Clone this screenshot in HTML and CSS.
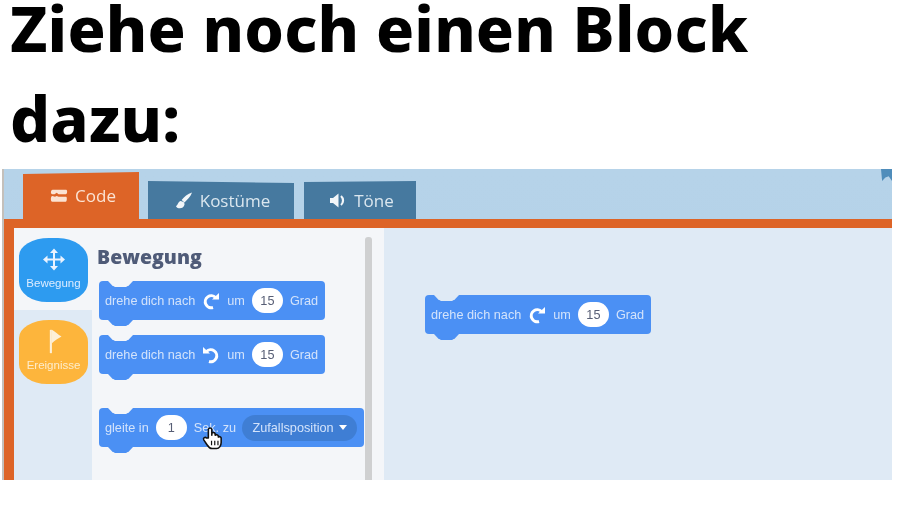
FILE: index.html
```html
<!DOCTYPE html>
<html lang="de">
<head>
    <meta charset="UTF-8">
    <title>Ziehe noch einen Block dazu</title>
    <link rel="stylesheet" href="styles.css">
</head>
<body>
<svg class="icon-defs" width="0" height="0">
    <symbol id="turn-right" viewBox="0 0 18 18">
        <path d="M13.500 5.500A6 6 0 1 0 11 15.500" fill="none" stroke="#fff" stroke-width="3"/>
        <path d="M10 7.500h7V1z" fill="#fff"/>
    </symbol>
    <symbol id="turn-left" viewBox="0 0 18 18">
        <path d="M4.500 5.500A6 6 0 1 1 7 15.500" fill="none" stroke="#fff" stroke-width="3"/>
        <path d="M8 7.500H1V1z" fill="#fff"/>
    </symbol>
</svg>

<h1 class="title">
    <span class="title-line">Ziehe noch einen Block</span>
    <span class="title-line">dazu:</span>
</h1>

<div class="scratch">
    <div class="ribbon"></div>
    <div class="tabs">
        <div class="tab tab-code">
            <svg class="tab-icon" viewBox="0 0 20 14"><path d="M3 .5h15c1.500 0 1.500 5-.5 5H9.500L7.500 4 5 5.500H2.500C.5 5.500.5.500 3 .5zM2.500 7.500l3 1 2-1 2 1h8.500c1 0 1 5.500-.5 5.500H2.500C.5 14 .5 7.500 2.500 7.500z" fill="#fbe3d3"/></svg>
            <span>Code</span>
        </div>
        <div class="tab tab-costumes">
            <svg class="tab-icon" viewBox="0 0 18 18"><path d="M17.500.5C13 2 9 5 6.500 8.500l3 2.500C12.500 8 16 5 17.500.5zM5.500 9.500C3 10 3 13 .5 15c2 3.500 8 3 9-1.500.3-1.500-.5-2.500-1-3z" fill="#f2f6f9"/></svg>
            <span>Kostüme</span>
        </div>
        <div class="tab tab-sounds">
            <svg class="tab-icon" viewBox="0 0 18 16"><path d="M1 5.500h3L9.500 1v14L4 10.500H1z" fill="#f2f6f9"/><path d="M12 3.500a6 6 0 0 1 0 9" fill="none" stroke="#f2f6f9" stroke-width="2.200"/></svg>
            <span>Töne</span>
        </div>
    </div>

    <div class="editor">
        <div class="categories">
            <div class="category-slot">
                <div class="category category-motion">
                    <svg class="category-icon" viewBox="0 0 24 24">
                        <path d="M12 1l4 4.500h-3V11h5.500V8l4.500 4-4.500 4v-3H13v5.500h3L12 23l-4-4.500h3V13H5.500v3L1 12l4.500-4v3H11V5.500H8z" fill="#eaf3ff"/>
                    </svg>
                    <span>Bewegung</span>
                </div>
            </div>
            <div class="category-slot category-slot-low">
                <div class="category category-events">
                    <svg class="category-icon" viewBox="0 0 24 30">
                        <path d="M7 1h2.500v28H7z" fill="#fdf0d8"/>
                        <path d="M9.500 1C13 3 17 7 21 9c-4 2-8 5-11.500 8z" fill="#fdf0d8"/>
                    </svg>
                    <span>Ereignisse</span>
                </div>
            </div>
        </div>

        <div class="palette">
            <div class="palette-list">
                <h2 class="palette-title">Bewegung</h2>
                <div class="block block-turn">
                    <span>drehe dich nach</span>
                    <svg class="turn-icon"><use href="#turn-right"/></svg>
                    <span>um</span>
                    <span class="pill">15</span>
                    <span>Grad</span>
                </div>
                <div class="block block-turn">
                    <span>drehe dich nach</span>
                    <svg class="turn-icon"><use href="#turn-left"/></svg>
                    <span>um</span>
                    <span class="pill">15</span>
                    <span>Grad</span>
                </div>
                <div class="block block-glide">
                    <span>gleite in</span>
                    <span class="pill">1</span>
                    <span>Sek. zu</span>
                    <span class="dropdown">Zufallsposition <i class="caret"></i></span>
                    <svg class="cursor" viewBox="0 0 24 28">
                        <path d="M8 14V4.500a2 2 0 0 1 3.800 0V11l0-2a2 2 0 0 1 3.500 0l.2 2a2 2 0 0 1 3.300.5l.2 1.500a1.800 1.800 0 0 1 3 1v5c0 3-2 6.500-5 6.500h-5c-3 0-4-2-6-5l-3-4.500c-1-2 1.500-3.500 3-2z" fill="#fff" stroke="#111" stroke-width="1.700" stroke-linejoin="round"/>
                        <path d="M11.500 17v5M15 17v5M18.500 17v5" stroke="#111" stroke-width="1.300"/>
                    </svg>
                </div>
            </div>
            <div class="scrollbar"></div>
        </div>

        <div class="workspace">
            <div class="block block-turn block-placed">
                <span>drehe dich nach</span>
                <svg class="turn-icon"><use href="#turn-right"/></svg>
                <span>um</span>
                <span class="pill">15</span>
                <span>Grad</span>
            </div>
        </div>
    </div>
</div>
</body>
</html>
```

FILE: styles.css
```css
* {
    box-sizing: border-box;
}

body {
    margin: 0;
    background: #fff;
    overflow: hidden;
}

.icon-defs {
    position: absolute;
}

.title {
    height: 169px;
    margin: 0;
    padding-left: 10px;
    font-family: "Noto Sans", sans-serif;
    font-size: 63px;
    font-weight: 800;
    line-height: 56px;
    letter-spacing: 0.2px;
    color: #000;
}

.title-line {
    display: block;
    margin-bottom: 34px;
}

.scratch {
    position: relative;
    width: 890px;
    height: 311px;
    margin-left: 2px;
    display: flex;
    flex-direction: column;
    background: linear-gradient(#b6d3e9, #b2d1e7);
    border-left: 2px solid #c4c0bb;
    font-family: "Liberation Sans", sans-serif;
    filter: blur(0.4px);
}

.ribbon {
    position: absolute;
    top: 0;
    right: 0;
    width: 11px;
    height: 12px;
    background: #4f8dbb;
    clip-path: polygon(0 0, 100% 0, 100% 100%, 70% 60%, 40% 70%, 10% 100%);
}

.tabs {
    height: 50px;
    display: flex;
    align-items: flex-end;
    padding-left: 19px;
    font-family: "Open Sans", sans-serif;
    font-size: 17px;
}

.tab {
    display: flex;
    align-items: center;
    justify-content: center;
    gap: 7px;
}

.tab-code {
    width: 116px;
    height: 47px;
    margin-right: 9px;
    padding-left: 4px;
    background: #dd6427;
    color: #fbe3d3;
    clip-path: polygon(0 2px, 100% 0, 100% 100%, 0 100%);
}

.tab-costumes {
    width: 146px;
    height: 38px;
    margin-right: 10px;
    padding-left: 3px;
    background: #46799f;
    color: #dbe7ef;
    clip-path: polygon(0 0, 100% 2px, 100% 100%, 0 100%);
}

.tab-sounds {
    width: 112px;
    height: 38px;
    padding-left: 3px;
    background: #46799f;
    color: #dbe7ef;
    clip-path: polygon(0 1px, 100% 0, 100% 100%, 0 100%);
}

.tab-icon {
    width: 18px;
    height: 17px;
}

.editor {
    flex: 1;
    min-height: 0;
    display: flex;
    border-top: 9px solid #dd6427;
    border-left: 10px solid #dd6427;
}

.categories {
    width: 78px;
    background: #dfeaf5;
}

.category-slot {
    height: 82px;
    padding: 10px 4px 0 5px;
    background: #f4f6f9;
}

.category-slot-low {
    background: transparent;
}

.category {
    height: 64px;
    display: flex;
    flex-direction: column;
    align-items: center;
    gap: 5px;
    padding-top: 9px;
    border-radius: 30px 30px 28px 28px / 18px 22px 20px 20px;
    font-size: 11.500px;
    color: #dcecff;
}

.category-motion {
    background: #2d9bf0;
}

.category-events {
    background: #fdb53c;
    color: #fdeccb;
}

.category-icon {
    width: 24px;
    height: 25px;
}

.palette {
    width: 292px;
    display: flex;
    background: #f4f6f9;
}

.palette-list {
    width: 273px;
    padding: 16px 0 0 5px;
}

.palette-title {
    margin: 0 0 11px;
    height: 26px;
    font-family: "Open Sans", sans-serif;
    font-size: 19.500px;
    font-weight: 800;
    line-height: 26px;
    color: #4f5b78;
}

.scrollbar {
    width: 7px;
    margin-top: 9px;
    background: #cfd0d1;
    border-radius: 3px 3px 0 0;
}

.workspace {
    flex: 1;
    position: relative;
    background: #dfeaf5;
}

.block {
    --notch: #f4f6f9;
    position: relative;
    width: 226px;
    height: 39px;
    margin: 2px 0 15px 2px;
    display: flex;
    align-items: center;
    gap: 6px;
    padding-left: 6px;
    background: #4b90f4;
    border-radius: 4px;
    font-size: 12.700px;
    color: #d3e3fb;
    white-space: nowrap;
}

.block::before,
.block::after {
    content: "";
    position: absolute;
    left: 9px;
    width: 25px;
    height: 6px;
    clip-path: polygon(0 0, 100% 0, 84% 70%, 72% 100%, 28% 100%, 16% 70%);
}

.block::before {
    top: 0;
    background: var(--notch);
}

.block::after {
    top: 100%;
    background: #4b90f4;
}

.block-glide {
    width: 265px;
    margin-top: 34px;
}

.block-placed {
    --notch: #dfeaf5;
    position: absolute;
    left: 41px;
    top: 67px;
    margin: 0;
}

.pill {
    width: 31px;
    height: 25px;
    margin: 0 1px;
    display: flex;
    align-items: center;
    justify-content: center;
    background: #fff;
    border-radius: 13px;
    color: #575e75;
}

.turn-icon {
    width: 18px;
    height: 18px;
    margin: 0 1px;
}

.dropdown {
    width: 115px;
    height: 26px;
    display: flex;
    align-items: center;
    justify-content: center;
    gap: 5px;
    background: #3f7ed4;
    border-radius: 13px;
}

.caret {
    width: 0;
    height: 0;
    border: 4px solid transparent;
    border-top: 5px solid #fff;
    border-bottom: 0;
}

.cursor {
    position: absolute;
    left: 102px;
    top: 17px;
    width: 22px;
    height: 26px;
}
```
